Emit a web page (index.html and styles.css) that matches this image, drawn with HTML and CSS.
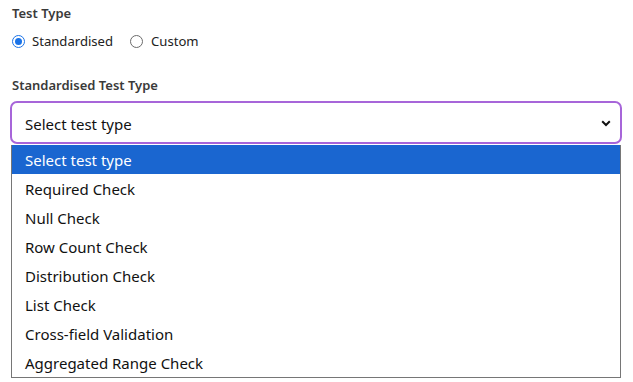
FILE: index.html
```html
<!DOCTYPE html>
<html lang="en">
<head>
<meta charset="utf-8">
<title>Test Type</title>
<link rel="stylesheet" href="styles.css">
</head>
<body>
<div class="form">
  <div class="group">
    <div class="label">Test Type</div>
    <div class="radios">
      <label class="radio"><span class="dot checked"></span><span>Standardised</span></label>
      <label class="radio"><span class="dot"></span><span>Custom</span></label>
    </div>
  </div>
  <div class="group second">
    <div class="label">Standardised Test Type</div>
    <div class="select-wrap">
      <div class="select">
        <span>Select test type</span>
        <svg class="chev" width="10" height="7" viewBox="0 0 10 7"><path d="M1.2 1.3 L5 5 L8.8 1.3" fill="none" stroke="#111" stroke-width="2"/></svg>
      </div>
      <ul class="list">
        <li class="active">Select test type</li>
        <li>Required Check</li>
        <li>Null Check</li>
        <li>Row Count Check</li>
        <li>Distribution Check</li>
        <li>List Check</li>
        <li>Cross-field Validation</li>
        <li>Aggregated Range Check</li>
      </ul>
    </div>
  </div>
</div>
</body>
</html>
```
FILE: styles.css
```css
html, body { margin: 0; padding: 0; background: #fff; }
body { font-family: "Noto Sans", "Open Sans", sans-serif; color: #212529; }
.form { padding: 4px 11px 0 10px; width: 612px; }
.label { font-size: 13px; font-weight: 600; color: #3a3a3a; line-height: 18px; margin-left: 2px; }
.radios { display: flex; gap: 15px; margin-top: 10px; align-items: center; }
.radio { display: flex; align-items: center; gap: 8px; font-size: 13.1px; color: #222; line-height: 18px; }
.radio:first-child { gap: 7px; }
.dot { width: 11px; height: 11px; border: 1px solid #6b6b6b; border-radius: 50%; box-sizing: content-box; margin-left: 2px; }
.dot.checked { border-color: #1a73e8; position: relative; }
.dot.checked::after { content: ""; position: absolute; left: 2px; top: 2px; width: 7px; height: 7px; border-radius: 50%; background: #1a73e8; }
.second { margin-top: 26px; }
.select-wrap { margin-top: 7px; }
.select { border: 2px solid #a765d9; border-radius: 7px; display: flex; align-items: center; justify-content: space-between; padding: 2px 9px 0 13px; box-sizing: content-box; height: 37px; font-size: 15px; color: #111; }
.chev { margin-top: -1px; }
.list { list-style: none; margin: 1px 1px 0 1px; padding: 0; border: 1px solid #767676; border-top: 0; }
.list li { height: 29px; line-height: 31px; padding-left: 13px; font-size: 15px; color: #111; box-sizing: border-box; }
.list li.active { background: #1a66d0; color: #fff; }
```
